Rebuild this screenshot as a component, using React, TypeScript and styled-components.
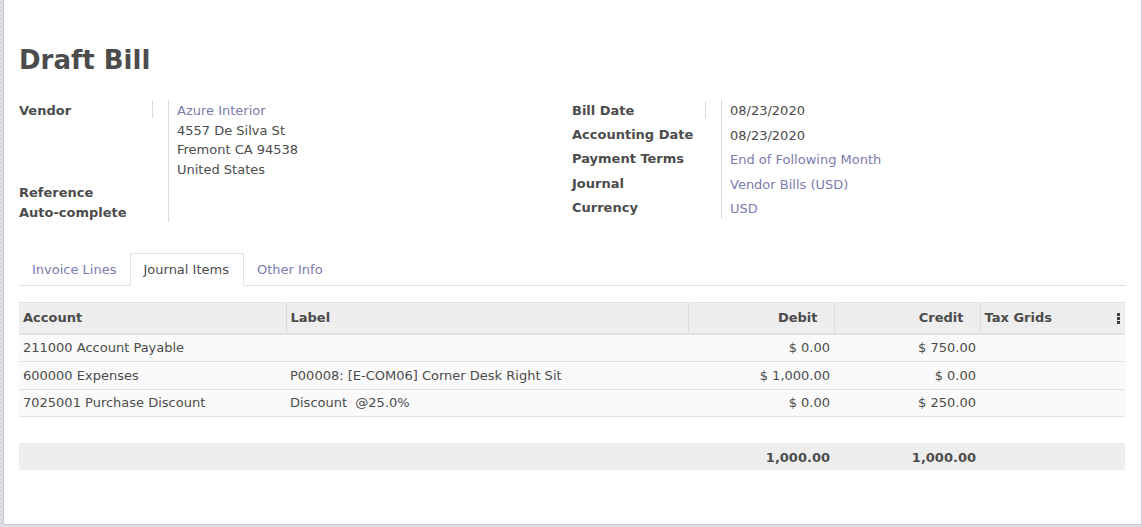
import React from "react";
import styled, { createGlobalStyle } from "styled-components";

const Global = createGlobalStyle`
  html, body { margin: 0; padding: 0; }
  body {
    font-family: "DejaVu Sans", Verdana, sans-serif;
    font-size: 13px;
    color: #4c4c4c;
    background-color: #e4e4e8;
    background-image:
      linear-gradient(45deg, #d4d4da 25%, transparent 25%, transparent 75%, #d4d4da 75%),
      linear-gradient(45deg, #d4d4da 25%, transparent 25%, transparent 75%, #d4d4da 75%);
    background-size: 4px 4px;
    background-position: 0 0, 2px 2px;
  }
`;

const Page = styled.div`
  width: 1142px;
  height: 527px;
  box-sizing: border-box;
  padding: 0 0 2px 3px;
  overflow: hidden;
`;

const Sheet = styled.div`
  box-sizing: border-box;
  width: 1139px;
  height: 525px;
  background: #ffffff;
  border: 1px solid #c9c9d1;
  border-top: none;
  padding: 40px 15px 0 15px;
`;

const Title = styled.h1`
  margin: 0;
  font-family: "DejaVu Sans", Verdana, sans-serif;
  font-size: 26px;
  font-weight: bold;
  line-height: 40px;
  color: #4c4c4c;
`;

const Groups = styled.div`
  display: grid;
  grid-template-columns: 553px 553px;
  margin-top: 20px;
`;

const Group = styled.div<{ $label: number }>`
  display: grid;
  grid-template-columns: ${(p) => p.$label}px 1fr;
  align-content: start;
`;

const Label = styled.div<{ $divider?: boolean; $last?: boolean }>`
  font-weight: bold;
  line-height: 19.5px;
  padding-bottom: ${(p) => (p.$last ? 0 : 5)}px;
  display: flex;
  align-items: flex-start;
  span {
    display: block;
    flex: 1;
    border-right: ${(p) => (p.$divider ? "1px solid #d8d8d8" : "1px solid transparent")};
    height: ${(p) => (p.$divider ? "17px" : "auto")};
    margin-top: ${(p) => (p.$divider ? "1px" : "0")};
  }
`;

const Value = styled.div<{ $last?: boolean }>`
  margin-left: 15px;
  padding-left: 8px;
  padding-top: 1px;
  border-left: 1px solid #d8d8d8;
  line-height: 19.5px;
  padding-bottom: ${(p) => (p.$last ? 0 : 4)}px;
`;

const Link = styled.a`
  color: #7c7bad;
  text-decoration: none;
`;

const Tabs = styled.div`
  display: flex;
  margin-top: 31px;
  border-bottom: 1px solid #dee2e6;
  height: 32px;
`;

const Tab = styled.div<{ $active?: boolean }>`
  box-sizing: border-box;
  height: 33px;
  padding: ${(p) => (p.$active ? "0 14px 0 12px" : "0 13px 0 12px")};
  line-height: 32px;
  color: ${(p) => (p.$active ? "#4c4c4c" : "#7c7bad")};
  background: ${(p) => (p.$active ? "#fff" : "transparent")};
  border: 1px solid ${(p) => (p.$active ? "#dee2e6" : "transparent")};
  border-bottom: none;
  border-radius: 2px 2px 0 0;
`;

const Table = styled.table`
  margin-top: 16px;
  width: 1106px;
  border-collapse: collapse;
  table-layout: fixed;
`;

const Th = styled.th<{ $num?: boolean; $w: number }>`
  width: ${(p) => p.$w}px;
  box-sizing: border-box;
  height: 31px;
  background: #eeeeee;
  border-top: 1px solid #e2e2e2;
  border-bottom: 2px solid #dee2e6;
  border-left: 1px solid #dcdcdc;
  font-weight: bold;
  text-align: ${(p) => (p.$num ? "right" : "left")};
  padding: 0 ${(p) => (p.$num ? 16 : 4)}px 0 4px;
  position: relative;
  &:first-child { border-left: none; }
`;

const Kebab = styled.span`
  position: absolute;
  right: 5px;
  top: 10px;
  display: flex;
  flex-direction: column;
  gap: 1px;
  i {
    display: block;
    width: 3px;
    height: 3px;
    background: #3f3f3f;
  }
`;

const Row = styled.tr<{ $blank?: boolean }>`
  background: ${(p) => (p.$blank ? "#ffffff" : "#fafafa")};
  td {
    height: ${(p) => (p.$blank ? 25 : 26.5)}px;
    border-bottom: 1px solid ${(p) => (p.$blank ? "transparent" : "#e2e2e2")};
  }
`;

const Td = styled.td<{ $num?: boolean }>`
  padding: 0 4px;
  text-align: ${(p) => (p.$num ? "right" : "left")};
  white-space: pre;
  overflow: hidden;
`;

const Foot = styled.tr`
  background: #eeeeee;
  td {
    height: 25px;
    padding-top: 2px;
    border-top: 1px solid #dddddd;
    font-weight: bold;
  }
`;

const lines = [
  { acc: "211000 Account Payable", label: "", debit: "$ 0.00", credit: "$ 750.00" },
  { acc: "600000 Expenses", label: "P00008: [E-COM06] Corner Desk Right Sit", debit: "$ 1,000.00", credit: "$ 0.00" },
  { acc: "7025001 Purchase Discount", label: "Discount  @25.0%", debit: "$ 0.00", credit: "$ 250.00" },
];

export default function App() {
  return (
    <>
      <Global />
      <Page>
        <Sheet>
          <Title>Draft Bill</Title>
          <Groups>
            <Group $label={134}>
              <Label $divider><span>Vendor</span></Label>
              <Value>
                <Link>Azure Interior</Link>
                <div>4557 De Silva St</div>
                <div>Fremont CA 94538</div>
                <div>United States</div>
              </Value>
              <Label $last><span>Reference<br />Auto-complete</span></Label>
              <Value $last />
            </Group>
            <Group $label={134}>
              <Label $divider><span>Bill Date</span></Label>
              <Value>08/23/2020</Value>
              <Label><span>Accounting Date</span></Label>
              <Value>08/23/2020</Value>
              <Label><span>Payment Terms</span></Label>
              <Value><Link>End of Following Month</Link></Value>
              <Label><span>Journal</span></Label>
              <Value><Link>Vendor Bills (USD)</Link></Value>
              <Label $last><span>Currency</span></Label>
              <Value $last><Link>USD</Link></Value>
            </Group>
          </Groups>
          <Tabs>
            <Tab>Invoice Lines</Tab>
            <Tab $active>Journal Items</Tab>
            <Tab>Other Info</Tab>
          </Tabs>
          <Table>
            <thead>
              <tr>
                <Th $w={267}>Account</Th>
                <Th $w={402}>Label</Th>
                <Th $w={146} $num>Debit</Th>
                <Th $w={146} $num>Credit</Th>
                <Th $w={145}>
                  Tax Grids
                  <Kebab><i /><i /><i /></Kebab>
                </Th>
              </tr>
            </thead>
            <tbody>
              {lines.map((l) => (
                <Row key={l.acc}>
                  <Td>{l.acc}</Td>
                  <Td>{l.label}</Td>
                  <Td $num>{l.debit}</Td>
                  <Td $num>{l.credit}</Td>
                  <Td />
                </Row>
              ))}
              <Row $blank>
                <Td /><Td /><Td /><Td /><Td />
              </Row>
            </tbody>
            <tfoot>
              <Foot>
                <Td /><Td />
                <Td $num>1,000.00</Td>
                <Td $num>1,000.00</Td>
                <Td />
              </Foot>
            </tfoot>
          </Table>
        </Sheet>
      </Page>
    </>
  );
}
